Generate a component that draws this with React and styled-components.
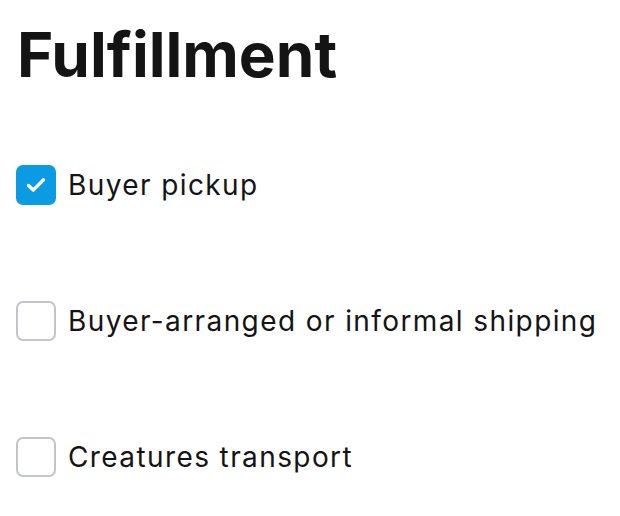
import React, { useState } from 'react';
import styled, { createGlobalStyle } from 'styled-components';

const Global = createGlobalStyle`
  body {
    margin: 0;
    background: #fff;
    font-family: Inter, "Noto Sans", sans-serif;
    color: #141414;
  }
`;

const Page = styled.div`
  padding: 14px 16px;
`;

const Title = styled.h1`
  margin: 0;
  padding-left: 1px;
  font-size: 62px;
  line-height: 82px;
  font-weight: 700;
  letter-spacing: 0;
  color: #141414;
`;

const List = styled.div`
  display: flex;
  flex-direction: column;
  gap: 96px;
  margin-top: 69px;
`;

const Row = styled.label`
  display: flex;
  align-items: center;
  gap: 12px;
  cursor: pointer;
`;

const Box = styled.span`
  width: 40px;
  height: 40px;
  box-sizing: border-box;
  border-radius: 7px;
  display: flex;
  align-items: center;
  justify-content: center;
  flex-shrink: 0;
  background: ${p => (p.checked ? '#0a9be3' : '#fff')};
  border: ${p => (p.checked ? 'none' : '2px solid #c2c5c9')};
`;

const Label = styled.span`
  font-size: 28px;
  line-height: 40px;
  font-weight: 400;
  letter-spacing: 1.4px;
  color: #141414;
`;

const Check = () => (
  <svg width="24" height="24" viewBox="0 0 24 24" fill="none">
    <path d="M4.5 12.5l4.8 4.6L19.5 6.8" stroke="#fff" strokeWidth="3.4" strokeLinecap="round" strokeLinejoin="round" />
  </svg>
);

const options = [
  'Buyer pickup',
  'Buyer-arranged or informal shipping',
  'Creatures transport',
];

export default function App() {
  const [checked, setChecked] = useState({ 0: true });
  return (
    <Page>
      <Global />
      <Title>Fulfillment</Title>
      <List>
        {options.map((o, i) => (
          <Row key={o} onClick={() => setChecked(c => ({ ...c, [i]: !c[i] }))}>
            <Box checked={checked[i]}>{checked[i] && <Check />}</Box>
            <Label>{o}</Label>
          </Row>
        ))}
      </List>
    </Page>
  );
}
